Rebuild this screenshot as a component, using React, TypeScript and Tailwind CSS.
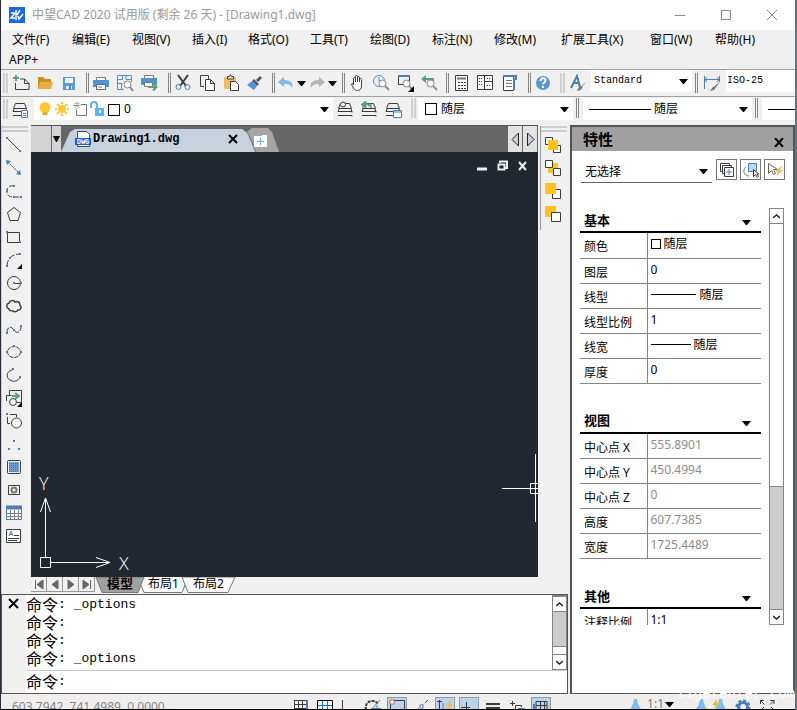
import type { ReactNode } from "react";

const INK = "#3c3c3c";
const BLUE = "#4a7fb5";

const MENUS = [
  ["文件(F)", "w-[60px]"],
  ["编辑(E)", "w-[60px]"],
  ["视图(V)", "w-[60px]"],
  ["插入(I)", "w-[56px]"],
  ["格式(O)", "w-[62px]"],
  ["工具(T)", "w-[60px]"],
  ["绘图(D)", "w-[62px]"],
  ["标注(N)", "w-[62px]"],
  ["修改(M)", "w-[67px]"],
  ["扩展工具(X)", "w-[89px]"],
  ["窗口(W)", "w-[65px]"],
  ["帮助(H)", "w-[60px]"],
];

function Icon({ children, size = 18 }: { children: ReactNode; size?: number }) {
  return (
    <svg width={size} height={size} viewBox={`0 0 ${size} ${size}`} fill="none" stroke={INK} className="block shrink-0" aria-hidden="true">
      {children}
    </svg>
  );
}

function Tool({ label, children, className = "h-6 w-6" }: { label: string; children: ReactNode; className?: string }) {
  return (
    <button type="button" title={label} aria-label={label} className={`flex shrink-0 items-center justify-center ${className}`}>
      <Icon>{children}</Icon>
    </button>
  );
}

function Caret({ className = "" }: { className?: string }) {
  return (
    <svg width="9" height="5" viewBox="0 0 9 5" className={`block shrink-0 ${className}`} aria-hidden="true">
      <path d="M0 0H9L5 5H4Z" fill="#000" />
    </svg>
  );
}

function Sep({ className, thick = false }: { className: string; thick?: boolean }) {
  return (
    <div className={`flex shrink-0 justify-end gap-px ${className}`}>
      <div className={`h-5 ${thick ? "w-[2px] bg-[#cfcfcf]" : "w-px bg-[#858585]"}`} />
      <div className={`h-5 ${thick ? "w-[2px] bg-[#cfcfcf]" : "w-px bg-[#858585]"}`} />
    </div>
  );
}

function Combo({ label, value, lead, className, mono = false, caret = true }: { label: string; value: string; lead?: ReactNode; className: string; mono?: boolean; caret?: boolean }) {
  return (
    <div className={`relative flex h-[22px] shrink-0 items-center bg-white ${className}`}>
      {lead}
      <select
        aria-label={label}
        className={`h-full min-w-0 flex-1 appearance-none bg-transparent leading-5 outline-none ${mono ? "font-['Liberation_Mono','Noto_Sans_CJK_SC',monospace] text-[10px]" : "text-xs"}`}
      >
        <option>{value}</option>
      </select>
      {caret && <Caret className="pointer-events-none absolute right-1" />}
    </div>
  );
}

function Swatch() {
  return <span className="mr-1 h-3 w-3 shrink-0 border border-black bg-white" />;
}

const magnifier = (
  <g stroke="#92888e">
    <circle cx="10.5" cy="9.5" r="3.5" fill="#f7f7f7" />
    <path d="M13 12l4 4" strokeWidth="2" />
  </g>
);

function MainToolbar() {
  return (
    <div className="flex h-[27px] items-center overflow-hidden border-t border-[#a0a0a0]">
      <Sep className="mr-px w-[7px]" thick />
      <Tool label="新建">
        <path d="M3.500 9V15.500H17V9.500H12.500V5H8M12.500 5L17 9.500" />
        <path d="M4 1v6M1 4h6" stroke="#5a9e88" strokeWidth="2" />
      </Tool>
      <Tool label="打开">
        <path d="M2 3h5l2 2h6v9H2z" fill="#c98f26" stroke="none" />
        <path d="M4 8h13l-2 7H2z" fill="#e8ae42" stroke="none" />
      </Tool>
      <Tool label="保存">
        <path d="M3 3h12v13H3z" fill="#5a9bd8" stroke="none" />
        <path d="M5 4h8v5H5zM6 12h6v3H6z" fill="#eaf1f8" stroke="none" />
        <path d="M9 12h2v3H9z" fill="#4a82bb" stroke="none" />
      </Tool>
      <Sep className="w-2" />
      <Tool label="打印">
        <path d="M4.500 6V3.500h9V6" stroke="#777" fill="#fff" />
        <path d="M1 6h16v7H1z" fill="#4d93d6" stroke="none" />
        <path d="M4.500 10.500h9v5h-9z" fill="#fff" stroke="#666" />
        <path d="M6 13h4" stroke="#5b84b4" />
      </Tool>
      <Tool label="打印预览">
        <path d="M15.500 8V1.500h-14v14H8M1.500 5.500h5v-4M6.500 9.500h-5M10 1.500v4h5M5.500 9v6" stroke="#4f8fcd" />
        <circle cx="11.500" cy="10.500" r="3.500" stroke="#8d8489" fill="#f7f7f7" />
        <path d="M14 13l3 4" stroke="#8d8489" strokeWidth="2" />
      </Tool>
      <Tool label="输出">
        <path d="M4.500 4V1.500h9V4" stroke="#777" fill="#fff" />
        <path d="M1 4h16v7H1z" fill="#4d93d6" stroke="none" />
        <path d="M4.500 8.500h8v4h-8z" fill="#fff" stroke="#777" />
        <path d="M8 13h8M13 9.500l3.500 3.500-3.500 3.500" stroke="#5a9e88" strokeWidth="2" />
      </Tool>
      <Sep className="w-[10px]" />
      <Tool label="剪切">
        <path d="M4 1l8 11M14 1L6 12" strokeWidth="2" />
        <circle cx="4.500" cy="13" r="2.500" stroke={BLUE} />
        <circle cx="13.500" cy="13" r="2.500" stroke={BLUE} />
      </Tool>
      <Tool label="复制">
        <path d="M6 12.500H2.500v-11h8v4" />
        <path d="M7.500 5.500h5l4 4v7h-9zM12.500 5.500v4h4" fill="#fff" />
      </Tool>
      <Tool label="粘贴">
        <path d="M2 3h12v12H2z" fill="#ebbd6a" stroke="none" />
        <path d="M5.500 5V2.500h2l1-2 1 2h2V5z" fill="#eee" />
        <path d="M8.500 7.500h5l3 3v6h-8z" fill="#fff" />
      </Tool>
      <Tool label="特性匹配">
        <path d="M15 3l-4 4" strokeWidth="3" stroke="#4c5865" />
        <path d="M8 5l5 5-2 2-5-5z" fill="#4c5865" stroke="none" />
        <path d="M6 7l5 5-3 4-7-5z" fill="#4f93d6" stroke="none" />
      </Tool>
      <Sep className="w-2" />
      <Tool label="放弃" className="h-6 w-[22px]">
        <path d="M7 3L1 8l6 5v-3c5 0 7 1 8 4 2-5-2-8-8-8z" fill="#7fb9ee" stroke="none" />
      </Tool>
      <button type="button" aria-label="放弃列表" className="w-[9px]"><Caret /></button>
      <Tool label="重做" className="h-6 w-[22px]">
        <path d="M11 3l6 5-6 5v-3c-5 0-7 1-8 4-2-5 2-8 8-8z" fill="#b4b4b4" stroke="none" />
      </Tool>
      <button type="button" aria-label="重做列表" className="w-[9px]"><Caret /></button>
      <Sep className="w-[8px]" />
      <Tool label="平移">
        <path d="M5.500 10V4.500a1 1 0 012 0V8 2.500a1 1 0 012 0V8 3.500a1 1 0 012 0V8 5.500a1 1 0 012 0V12c0 3-2 4.500-4 4.500-3 0-4-2-6-6.500 1-1 2 0 2 1z" fill="#fff" />
      </Tool>
      <Tool label="实时缩放">
        <circle cx="7" cy="7" r="5.500" stroke="#4f8fcd" />
        <path d="M7 3v4h2" stroke="#4f8fcd" />
        {magnifier}
      </Tool>
      <Tool label="窗口缩放">
        <path d="M2.500 1.500h11v9h-11z" />
        <path d="M2 2h12" stroke={BLUE} strokeWidth="2" />
        {magnifier}
        <path d="M18 12v6h-6z" fill="#000" stroke="none" />
      </Tool>
      <Tool label="缩放上一个">
        <path d="M6 1v8L1 5z" fill="#5a9e88" stroke="none" />
        <path d="M5 5h8v2" stroke="#5a9e88" strokeWidth="2" />
        {magnifier}
      </Tool>
      <Sep className="w-2" />
      <Tool label="计算器">
        <path d="M3.500 1.500h12v15h-12z" fill="#fafafa" />
        <path d="M5 4.500h9" strokeWidth="2" stroke="#737373" />
        <path d="M6 8.500h8M6 11.500h8M6 14.500h8" strokeDasharray="2 1" />
      </Tool>
      <Tool label="设计中心">
        <path d="M1.500 1.500h15v14h-15zM8.500 2v13M9 7.500h7" fill="#fafafa" />
        <path d="M3 4.500h4M3 7.500h4M3 10.500h4M11 4.500h4M11 11.500h4" strokeDasharray="1 1" />
      </Tool>
      <Tool label="工具选项板">
        <path d="M3.500 2.500h10v14h-10z" fill="#fafafa" />
        <path d="M3 2h13v3h-2v11" stroke={BLUE} strokeWidth="2" />
        <path d="M6 6.500h6M6 9.500h6M6 12.500h6" stroke="#777" />
      </Tool>
      <Sep className="w-[10px]" />
      <Tool label="帮助">
        <circle cx="9" cy="9" r="7" fill="#5696d2" stroke="none" />
        <path d="M6.500 7c0-4 5-3 5-.5C11.500 8 9 8.500 9 10.500M9 12v2" stroke="#fff" strokeWidth="2" />
      </Tool>
      <Sep className="w-[10px]" thick />
      <Tool label="文字样式" className="ml-[2px] h-6 w-6">
        <path d="M1 14L7 2l3 11M4 9h5" stroke={BLUE} strokeWidth="2" />
        <path d="M17 7l-4 5-2 4-4 1 2-4 3-1z" fill="#777" stroke="none" />
      </Tool>
      <Combo label="文字样式名称" value="Standard" mono className="w-[101px] self-start pl-[3px]" />
      <Sep className="w-[6px]" />
      <Tool label="标注样式" className="ml-[2px] h-6 w-6">
        <path d="M1.500 2v13M16.500 2v6M2 5.500h14M4 3L2 5.500 4 8M14 3l2 2.500L14 8" stroke={BLUE} />
        <path d="M17 7l-3 5-3 4-4 1 3-4 2-1z" fill="#777" stroke="none" />
      </Tool>
      <Combo label="标注样式名称" value="ISO-25" mono caret={false} className="ml-[2px] min-w-0 flex-1 self-start pl-px" />
    </div>
  );
}

function LayerGlyphs() {
  return (
    <svg width="90" height="18" viewBox="0 0 90 18" fill="none" className="block shrink-0" aria-hidden="true">
      <circle cx="11" cy="7.500" r="5.500" fill="#ffc533" />
      <path d="M8.500 12h5v3h-5z" fill="#e5aa28" />
      <g stroke="#ffc533" strokeWidth="2">
        <circle cx="28" cy="9" r="3" fill="#ffc533" />
        <path d="M28 2v2M28 14v2M21 9h2M33 9h2M23 4l2 2M31 12l2 2M33 4l-2 2M25 12l-2 2" />
      </g>
      <g stroke="#777">
        <path d="M47 4.500h5.500v11h-10v-6" />
        <path d="M43 2v7M39.500 5.500h7M40.500 3l5 5M45.500 3l-5 5" strokeDasharray="2 1" />
      </g>
      <path d="M57 8V5c0-4 6-4 6 0v4" stroke="#59b3f5" strokeWidth="2" />
      <path d="M61 8h9v8h-9z" fill="#59b3f5" />
      <path d="M65 10h2v3h-2z" fill="#fff" />
      <path d="M74.500 4.500h11v11h-11z" stroke="#000" fill="#fff" />
    </svg>
  );
}

const stack = <path d="M4.500 2.500h9l2 5h-13zM2 10.500h14v1M2 14.500h14v1M3 8l-1 3M15 8l1 3" />;

function LayerToolbar() {
  return (
    <div className="flex h-[29px] items-start overflow-hidden border-t border-[#a0a0a0] pt-px">
      <Sep className="mt-px w-[7px]" thick />
      <Tool label="图层特性管理器" className="h-6 w-[26px] pr-[2px]">
        {stack}
        <path d="M10.500 9.500h6v7h-6zM12 12.500h3M12 14.500h3" fill="#fff" stroke={BLUE} />
      </Tool>
      <Combo label="图层" value="0" lead={<LayerGlyphs />} className="w-[299px]" />
      <Tool label="置为当前图层">
        {stack}
        <circle cx="7" cy="3.500" r="2.500" fill="#f0f0f0" />
      </Tool>
      <Tool label="上一个图层">
        {stack}
        <path d="M6 0v7L1 3.500zM6 3h5v4" stroke="#5a9e88" fill="#5a9e88" />
      </Tool>
      <Tool label="图层状态">
        {stack}
        <path d="M9.500 9.500h8v7h-8zM10 11h7" fill="#fff" stroke={BLUE} />
      </Tool>
      <Sep className="w-[11px]" thick />
      <Combo label="颜色" value="随层" className="ml-[2px] w-[155px] pl-[7px]" lead={<Swatch />} />
      <Sep className="w-[6px]" />
      <Combo label="线型" value="随层" className="ml-1 w-[169px] pl-[6px]" lead={<span className="mr-[3px] h-px w-[62px] bg-black" />} />
      <Sep className="w-[6px]" />
      <div className="ml-1 flex h-[22px] min-w-0 flex-1 items-center bg-white pl-[6px]"><span className="h-px w-full bg-black" /></div>
    </div>
  );
}

const DOT = { fill: BLUE, stroke: "none" };

const DRAW_TOOLS: [string, ReactNode][] = [
  ["直线", <><path d="M2 2l13 13" /><path d="M1 1h2v2H1zM14 14h2v2h-2z" {...DOT} /></>],
  ["构造线", <><path d="M3 3l12 12" strokeDasharray="2 1" /><path d="M1 1l5 1-4 4zM16 16l-5-1 4-4z" {...DOT} /></>],
  ["多段线", <><path d="M9 4C0 2-1 15 8 15h8" strokeDasharray="5 2" /><path d="M8 3h2v2H8zM1 8h2v2H1zM8 14h2v2H8zM15 14h2v2h-2z" {...DOT} /></>],
  ["正多边形", <path d="M9 2.500l6.500 5-2.500 8H5l-2.500-8z" />],
  ["矩形", <><path d="M2.500 4.500h12v10h-12z" /><path d="M1 3h2v2H1zM14 13h2v2h-2z" {...DOT} /></>],
  ["圆弧", <><path d="M2 15C2 8 7 3 15 3" strokeDasharray="6 2" /><path d="M1 14h2v2H1zM4 6h2v2H4zM14 2h2v2h-2z" {...DOT} /><path d="M17 13v5h-5z" fill="#000" stroke="none" /></>],
  ["圆", <><circle cx="9" cy="9" r="6.500" /><path d="M9 9.500h7" /><path d="M8 8h2v2H8zM15 8h2v2h-2z" {...DOT} /></>],
  ["修订云线", <path d="M4 12c-3-1-3-5 0-6 1-3 5-3 6-1 3-1 5 0 5 3 2 2 1 5-2 5-1 2-4 2-5 1-2 0-4 0-4-2z" strokeWidth="1.5" />],
  ["样条曲线", <><path d="M2 12C3 6 6 6 9 10c3 4 6 3 7-3" strokeDasharray="5 1" /><path d="M1 12h2v2H1zM8 9h2v2H8zM15 5h2v2h-2z" {...DOT} /></>],
  ["椭圆", <><ellipse cx="9" cy="9" rx="6.500" ry="5.500" strokeDasharray="4 1" /><path d="M8 2h2v2H8zM1 8h2v2H1zM15 8h2v2h-2z" {...DOT} /></>],
  ["椭圆弧", <><path d="M7 4c-6 1-7 9 0 11 4 1 7-1 8-4" /><path d="M7 2h2v2H7zM14 10h2v2h-2z" {...DOT} /></>],
  ["插入块", <><path d="M4.500 6V1.500h12v12H12M1.500 12V6.500h5" fill="none" /><path d="M7 7h6M10 4l4 3-4 3" stroke="#5a9e88" strokeWidth="2" /><circle cx="8" cy="13" r="3.500" fill="#f4f4f4" /><path d="M17 13v5h-5z" fill="#000" stroke="none" /></>],
  ["创建块", <><path d="M5 2.500h6.500V5M2.500 5v6.500H5" /><circle cx="11.500" cy="11" r="5" fill="#f7f7f7" /><path d="M1 1h2v2H1z" {...DOT} /></>],
  ["点", <path d="M8 5h2v2H8zM3 13h2v2H3zM13 13h2v2h-2z" {...DOT} />],
  ["图案填充", <><rect x="2.500" y="2.500" width="13" height="13" rx="1" /><path d="M4 4h10v10H4z" fill="#6fa0cf" stroke="none" /><path d="M4 5.500h10M4 7.500h10M4 9.500h10M4 11.500h10M4 13.500h10" stroke="#3f73a8" strokeDasharray="1 1" /></>],
  ["面域", <><path d="M3.500 4.500h11v9h-11z" /><circle cx="9" cy="9" r="2.500" stroke="#777" strokeWidth="2" /></>],
  ["表格", <><path d="M1.500 2.500h15v13h-15z" fill="#fff" stroke={BLUE} /><path d="M1 3.500h16" stroke={BLUE} strokeWidth="4" /><path d="M5.500 6v9M9.500 6v9M13.500 6v9M2 9.500h14M2 12.500h14" stroke="#85798a" /></>],
  ["多行文字", <><path d="M1.500 2.500h14v13h-14z" fill="#fff" /><path d="M4 9l2-5 2 5M5 7.500h3" stroke={BLUE} /><path d="M9 8.500h5M3 11.500h11M3 13.500h9" /></>],
];

const ORDER_TOOLS: [string, ReactNode][] = [
  ["前置", <><path d="M1.500 1.500h7v7h-7zM9.500 9.500h7v7h-7z" fill="#fff" /><path d="M4 4h10v10H4z" fill="#ffc222" stroke="none" /></>],
  ["后置", <><path d="M4 4h10v10H4z" fill="#ffc222" stroke="none" /><path d="M1.500 1.500h7v7h-7zM9.500 9.500h7v7h-7z" fill="#fff" /></>],
  ["置于对象之上", <><path d="M8.500 7.500h8v9h-8z" fill="#fff" /><path d="M1 1h11v11H1z" fill="#ffc222" stroke="none" /></>],
  ["置于对象之下", <><path d="M1 1h11v11H1z" fill="#ffc222" stroke="none" /><path d="M7.500 7.500h9v9h-9z" fill="#fff" /></>],
];

function DocumentTabs() {
  return (
    <div className="flex h-[27px] shrink-0 items-stretch border-t border-[#555] bg-[#666]">
      <div className="w-5 bg-[#d4d4d4]" />
      <button type="button" aria-label="文档列表" className="ml-px flex w-[9px] items-center justify-center bg-[#d4d4d4]">
        <svg width="7" height="6" viewBox="0 0 7 6" aria-hidden="true"><path d="M0 0h7L4 6H3z" fill="#000" /></svg>
      </button>
      <div className="relative flex w-[193px] items-center pl-[13px]">
        <svg width="218" height="26" viewBox="0 0 218 26" className="absolute left-0 top-0" aria-hidden="true">
          <path d="M184 26V7l7-5h16l4 4 7 20z" fill="#a5a5a5" />
          <path d="M0 26L9 6l5-3h167l5 4 8 19z" fill="#c7d2de" />
          <path d="M182 3l5 4 8 19" fill="none" stroke="#777" />
          <path d="M193 10h8v-1h5v12h-13z" fill="#fff" />
          <path d="M199.500 12v7M196 15.500h7" stroke="#59b3f5" strokeWidth="1" fill="none" />
        </svg>
        <svg width="18" height="18" viewBox="0 0 18 18" fill="none" className="relative mr-px shrink-0" aria-hidden="true">
          <path d="M3.500 1.500h9l3 3v12h-12z" fill="#fff" stroke="#444" />
          <path d="M1 8h16v7H1z" fill="#0c62d8" />
          <text x="9" y="14" textAnchor="middle" fontSize="7" fontWeight="bold" fill="#fff" fontFamily="Liberation Mono, monospace">DWG</text>
        </svg>
        <button type="button" className="relative flex-1 text-left font-['Liberation_Mono',monospace] text-xs font-bold leading-6">Drawing1.dwg</button>
        <button type="button" aria-label="关闭 Drawing1.dwg" className="relative mr-[16px]">
          <svg width="10" height="10" viewBox="0 0 10 10" aria-hidden="true"><path d="M1 1l8 8M9 1L1 9" stroke="#000" strokeWidth="2" /></svg>
        </button>
      </div>
      <button type="button" aria-label="新建图形" className="w-[22px]" />
      <div className="flex-1" />
      <button type="button" aria-label="向左滚动" className="flex w-[14px] items-center justify-center bg-[#e2e2e2]">
        <svg width="9" height="15" viewBox="0 0 9 15" aria-hidden="true"><path d="M7.500 1v13L1 7.500z" fill="#c7d2de" stroke="#222" /></svg>
      </button>
      <button type="button" aria-label="向右滚动" className="mx-px flex w-[14px] items-center justify-center bg-[#e2e2e2]">
        <svg width="9" height="15" viewBox="0 0 9 15" aria-hidden="true"><path d="M1.500 1v13L8 7.500z" fill="#c7d2de" stroke="#222" /></svg>
      </button>
    </div>
  );
}

function Canvas() {
  return (
    <div className="relative min-h-0 flex-1 overflow-hidden bg-[#212830]">
      <div className="absolute right-[10px] top-2 flex gap-[9px]">
        <button type="button" aria-label="最小化图形"><svg width="11" height="12" viewBox="0 0 11 12" aria-hidden="true"><path d="M0 9h10" stroke="#eee" strokeWidth="3" /></svg></button>
        <button type="button" aria-label="还原图形"><svg width="11" height="12" viewBox="0 0 11 12" fill="none" aria-hidden="true"><path d="M3 3V1.500h7V8H8M1.500 4.500h6v5h-6z" stroke="#eee" strokeWidth="2" /></svg></button>
        <button type="button" aria-label="关闭图形"><svg width="11" height="12" viewBox="0 0 11 12" aria-hidden="true"><path d="M2 2l7 8M9 2l-7 8" stroke="#eee" strokeWidth="2" /></svg></button>
      </div>
      <svg width="100" height="100" viewBox="0 0 100 100" fill="none" stroke="#fff" className="absolute bottom-0 left-0" aria-hidden="true">
        <path d="M9.500 80.500h10v10h-10zM14.500 80V21M9.500 35l5-14 5 14M20 85.500h58M65 80.500l14 5-14 5" />
      </svg>
      <span className="absolute bottom-[84px] left-2 font-['Open_Sans',sans-serif] text-lg font-light leading-5 text-white">Y</span>
      <span className="absolute bottom-1 left-[88px] font-['Open_Sans',sans-serif] text-lg font-light leading-5 text-white">X</span>
      <svg width="36" height="68" viewBox="0 0 36 68" fill="none" stroke="#fff" className="absolute bottom-[55px] right-0" aria-hidden="true">
        <path d="M0 34.500h36M33.500 0v68M28.500 29.500h10v10h-10z" />
      </svg>
    </div>
  );
}

function LayoutTabs() {
  const arrows: [string, string][] = [
    ["第一个布局", "M4.500 3v9M12 3v9L6 7.500z"],
    ["上一个布局", "M11 3v9L5 7.500z"],
    ["下一个布局", "M5 3v9l6-4.500z"],
    ["最后一个布局", "M11.500 3v9M4 3v9l6-4.500z"],
  ];
  return (
    <div className="flex h-[17px] shrink-0 items-start">
      {arrows.map(([label, d]) => (
        <button key={label} type="button" aria-label={label} className="h-[15px] w-4 border-b border-r border-[#999]">
          <svg width="15" height="14" viewBox="0 0 15 14" className="block" aria-hidden="true"><path d={d} fill="#666" stroke="#666" /></svg>
        </button>
      ))}
      <div className="relative flex h-4 items-start text-xs leading-[13px]">
        <svg width="142" height="16" viewBox="0 0 142 16" fill="none" stroke="#777" className="absolute left-0 top-0" aria-hidden="true">
          <path d="M49 0h38l-2 8 3 7H48l-3-7z" fill="#fafafa" stroke="none" />
          <path d="M87 0l6 15.500h40L140 0z" fill="#fafafa" />
          <path d="M46 8l3 7.500h38l3-7.500" />
          <path d="M1 0l6 15.500h36L49 0z" fill="#a0a0a0" />
        </svg>
        <button type="button" className="relative ml-3 w-[41px] text-left text-[13px] font-bold">模型</button>
        <button type="button" className="relative w-[45px] text-left">布局1</button>
        <button type="button" className="relative text-left">布局2</button>
      </div>
    </div>
  );
}

function ScrollArrow({ up = false }: { up?: boolean }) {
  return (
    <button type="button" aria-label={up ? "向上滚动" : "向下滚动"} className="flex h-4 w-full shrink-0 items-center justify-center border border-[#858585] bg-white">
      <svg width="7" height="5" viewBox="0 0 7 5" fill="none" aria-hidden="true">
        <path d={up ? "M0 4l3.500-3L7 4" : "M0 1l3.500 3L7 1"} stroke="#222" strokeWidth="1.5" />
      </svg>
    </button>
  );
}

function PromptText({ text = "" }: { text?: string }) {
  return (
    <>
      <span className="text-[16px] leading-[18px]">命令</span>
      <span className="whitespace-pre font-['Liberation_Mono',monospace] text-[13px] leading-[18px]">: {text}</span>
    </>
  );
}

function CommandWindow() {
  return (
    <div className="mr-[2px] flex h-[100px] shrink-0 border border-[#555] bg-white">
      <div className="flex w-6 shrink-0 items-start bg-[#f0f0f0] pl-[6px] pt-[3px]">
        <button type="button" aria-label="关闭命令行">
          <svg width="11" height="11" viewBox="0 0 11 11" aria-hidden="true"><path d="M1 1l9 9M10 1l-9 9" stroke="#000" strokeWidth="2" /></svg>
        </button>
      </div>
      <div className="flex min-w-0 flex-1 flex-col">
        <div className="flex h-[76px] border-b border-[#ccc]">
          <div className="flex-1 overflow-hidden pt-px">
            {["_options", "", "", "_options"].map((text, i) => (
              <div key={i} className="flex h-[18px] items-center"><PromptText text={text} /></div>
            ))}
          </div>
          <div className="flex w-[15px] flex-col border-t border-[#858585]">
            <ScrollArrow up />
            <div className="h-[35px] border-x border-b border-[#858585] bg-[#cdcdcf]" />
            <div className="flex-1 border-x border-[#858585]" />
            <ScrollArrow />
          </div>
        </div>
        <div className="flex h-[22px] items-center">
          <label htmlFor="command" className="flex items-center"><PromptText /></label>
          <input id="command" className="min-w-0 flex-1 font-['Liberation_Mono',monospace] text-[13px] outline-none" />
        </div>
      </div>
    </div>
  );
}

type Row = { name: string; value: string; lead?: ReactNode; muted?: boolean; select?: boolean };

const SECTIONS: { title: string; rows: Row[] }[] = [
  {
    title: "基本",
    rows: [
      { name: "颜色", value: "随层", lead: <span className="mr-[3px] h-[10px] w-[10px] shrink-0 border border-black" />, select: true },
      { name: "图层", value: "0", select: true },
      { name: "线型", value: "随层", lead: <span className="mr-1 h-px w-[45px] shrink-0 bg-black" />, select: true },
      { name: "线型比例", value: "1" },
      { name: "线宽", value: "随层", lead: <span className="mr-[3px] h-px w-10 shrink-0 bg-black" />, select: true },
      { name: "厚度", value: "0" },
    ],
  },
  {
    title: "视图",
    rows: [
      { name: "中心点 X", value: "555.8901", muted: true },
      { name: "中心点 Y", value: "450.4994", muted: true },
      { name: "中心点 Z", value: "0", muted: true },
      { name: "高度", value: "607.7385", muted: true },
      { name: "宽度", value: "1725.4489", muted: true },
    ],
  },
  { title: "其他", rows: [{ name: "注释比例", value: "1:1", select: true }] },
];

function PropertySection({ title, rows }: { title: string; rows: Row[] }) {
  return (
    <section className="mb-[25px]">
      <button type="button" className="flex h-[25px] w-full items-center justify-between border-b-2 border-black pl-1 pr-[10px] text-[13px] font-bold leading-5">
        {title}
        <Caret className="mt-[6px]" />
      </button>
      <table className="w-full table-fixed border-collapse text-xs">
        <tbody>
          {rows.map((row) => (
            <tr key={row.name} className="h-[25px] border-b border-[#858585]">
              <th scope="row" className="w-[67px] border-r border-[#858585] p-0 text-left font-normal">
                <label htmlFor={row.name} className="block pl-1 pt-1 leading-5">{row.name}</label>
              </th>
              <td className="p-0">
                <div className="flex h-6 items-center pb-[2px] pl-[3px]">
                  {row.lead}
                  {row.select ? (
                    <select id={row.name} className="min-w-0 flex-1 appearance-none bg-transparent leading-5 outline-none"><option>{row.value}</option></select>
                  ) : (
                    <input id={row.name} defaultValue={row.value} readOnly={row.muted} className={`w-full min-w-0 bg-transparent leading-5 outline-none ${row.muted ? "text-[#8c8c8c]" : "text-black"}`} />
                  )}
                </div>
              </td>
            </tr>
          ))}
        </tbody>
      </table>
    </section>
  );
}

function PropertiesPanel() {
  const boxed = "h-[21px] w-[21px] border border-[#777]";
  return (
    <aside className="flex w-[225px] shrink-0 flex-col border-2 border-b border-[#555] bg-white">
      <header className="flex h-6 shrink-0 items-center justify-between bg-[#a0a0a0] pl-[11px] pr-[9px]">
        <h2 className="text-[15px] font-bold leading-6">特性</h2>
        <button type="button" aria-label="关闭特性" className="mt-[7px]">
          <svg width="10" height="9" viewBox="0 0 10 9" className="block" aria-hidden="true"><path d="M1 0l8 9M9 0L1 9" stroke="#000" strokeWidth="2" /></svg>
        </button>
      </header>
      <div className="flex shrink-0 items-start gap-[3px] pl-[9px] pr-[8px] pt-2">
        <div className="mr-px min-w-0 flex-1 border-b border-[#666]">
          <Combo label="选择对象" value="无选择" className="w-full pl-1 pt-[3px]" />
          <div className="h-px" />
        </div>
        <Tool label="切换 PICKADD" className={boxed}>
          <path d="M4 10.500H2.500v-8h9V4M6 12.500H4.500v-8h9v2M6.500 6.500h9v9h-9z" fill="#fff" />
          <path d="M11 8v6M8 11h6" stroke={BLUE} />
        </Tool>
        <Tool label="选择对象" className={boxed}>
          <path d="M4 6c-4 3-2 9 3 9" stroke="#777" />
          <path d="M6.500 2.500h8v8h-8z" fill="#b9dafb" stroke={BLUE} />
          <path d="M11.500 8.500v7l2-2 2 3 1-1-1.500-2.500h2z" fill="#fff" />
        </Tool>
        <Tool label="快速选择" className={boxed}>
          <path d="M2.500 2.500v10l3-3 2 4 2-1-2-4h4z" fill="#fff" stroke="#666" />
          <path d="M15 5l-6 6h3l-2 5 7-7h-3l2-4z" fill="#f3bd59" stroke="none" />
        </Tool>
      </div>
      <div className="mb-[68px] mt-[25px] flex min-h-0 flex-1 pl-2 pr-[9px]">
        <div className="min-w-0 flex-1 overflow-hidden pr-[8px]">
          {SECTIONS.map((section) => (
            <PropertySection key={section.title} {...section} />
          ))}
        </div>
        <div className="flex w-[15px] shrink-0 flex-col">
          <ScrollArrow up />
          <div className="flex-[262] border-x border-[#858585]" />
          <div className="flex-[122] border-x border-t border-[#858585] bg-[#cdcdcf]" />
          <ScrollArrow />
        </div>
      </div>
    </aside>
  );
}

const MODES: [string, boolean, ReactNode][] = [
  ["捕捉", false, <><path d="M2 2.500h12M2.500 2v14M6.500 2v14M10.500 2v14M2 6.500h12M2 10.500h12M2 14.500h12" /><path d="M14 2h2v14h-2z" {...DOT} /></>],
  ["栅格", false, <><path d="M1.500 2.500h15v14h-15z" fill="#fff" stroke="#000" /><path d="M6.500 3v13M11.500 3v13M2 7.500h14M2 12.500h14" stroke="#1673e8" /></>],
  ["正交", false, <path d="M2.500 2v14h12" />],
  ["极轴", false, <><path d="M2 12C1 6 4 3 8 3c3 0 5 1 6 3" strokeWidth="2" strokeDasharray="3 1" /><path d="M8 11l8-9M7 10.500h10M13 7v7" stroke={BLUE} /></>],
  ["对象捕捉", true, <><path d="M2.500 2.500h14v13h-14z" /><path d="M2 2h4v4H2z" stroke="#d9644a" fill="#fff" /></>],
  ["追踪", false, <><path d="M4 13L16 2" strokeDasharray="4 2" /><path d="M8 7h3v3H8z" stroke={BLUE} fill="#fff" /></>],
  ["动态UCS", true, <><path d="M3.500 2v14M1 3.500h5" /><path d="M7 5v8h8" stroke={BLUE} /><path d="M15 2l-6 6h3l-2 5 7-7h-3z" fill="#f5bc50" stroke="none" /></>],
  ["动态输入", true, <path d="M6.500 4v12M1 9.500h9" />],
  ["线宽", false, <path d="M2 6h14M2 10h14" strokeWidth="2" />],
  ["循环选择", false, <><path d="M4.500 3v5M2 5.500h5M7.500 11V7.500h6V9" /><path d="M10.500 10.500h6v5h-6z" stroke={BLUE} /></>],
  ["注释监视", true, <><path d="M4 3.500h11v10H4zM8.500 3v11M12.500 3v11M4 7.500h11" /><path d="M2 6v9h9" stroke={BLUE} strokeWidth="2" /></>],
];

const person = <path d="M8 1h3l1 5 4 7H3l4-7z" fill="#7dbdf0" stroke="none" />;

function StatusBar() {
  return (
    <footer className="relative flex h-4 shrink-0 items-start overflow-hidden border-b border-black bg-[#f0eded]">
      <output className="w-[290px] shrink-0 pl-[11px] pt-[5px] text-xs leading-4 text-[#858585]">603.7942, 741.4989, 0.0000</output>
      <div className="flex gap-1 pt-[3px]">
        {MODES.map(([label, on, art]) => (
          <Tool key={label} label={label} className={`h-5 w-5 border ${on ? "border-[#8c9aab] bg-[#bcd3ee]" : "border-transparent"}`}>{art}</Tool>
        ))}
      </div>
      <div className="flex-1" />
      <Tool label="注释比例" className="mt-[3px] h-5 w-6">{person}</Tool>
      <button type="button" className="flex items-center gap-px pt-[2px] text-xs leading-4 text-[#777]">1:1<Caret /></button>
      <Tool label="注释可见性" className="ml-[19px] mt-[3px] h-5 w-4">{person}<circle cx="14" cy="12" r="2" fill="#ffc222" stroke="none" /></Tool>
      <Tool label="自动缩放" className="mt-[3px] h-5 w-[22px]">{person}<path d="M6 1L1 7h3l-2 4 7-6H6z" fill="#f7b92e" stroke="none" /></Tool>
      <Tool label="设置" className="mt-[3px] h-5 w-6">
        <circle cx="9" cy="9" r="4.500" stroke={BLUE} strokeWidth="3" />
        <circle cx="9" cy="9" r="6.500" stroke={BLUE} strokeWidth="2" strokeDasharray="3 2" />
      </Tool>
      <Tool label="全屏显示" className="mr-4 mt-[3px] h-5 w-6"><path d="M2.500 6V2.500H6M2.500 2.500l4 4M12 2.500h4V6M16 2.500l-4 4M3 12l3-3M16 12l-3-3" /></Tool>
    </footer>
  );
}

export default function App() {
  return (
    <div className="flex h-screen min-h-[600px] flex-col overflow-hidden border-l border-r-2 border-l-[#2b2b3a] border-r-[#66727c] bg-[#f0f0f0] font-['Noto_Sans','Noto_Sans_CJK_SC',sans-serif] text-black">
      <div className="flex h-[30px] shrink-0 items-center bg-white pl-2 text-[#999]">
        <svg width="16" height="16" viewBox="0 0 16 16" fill="none" className="mr-[7px]" aria-hidden="true">
          <path d="M0 0h16v16H0z" fill="#1769e8" />
          <path d="M2 6h4L2 11h4M7 3v10M11 3L8 8M9 9l1 3 4-5" stroke="#fff" strokeWidth="1.500" />
        </svg>
        <h1 className="flex-1 text-xs font-normal leading-5">中望CAD 2020 试用版 (剩余 26 天) - [Drawing1.dwg]</h1>
        <div className="flex gap-9 pr-[18px]">
          <button type="button" aria-label="最小化"><svg width="10" height="10" viewBox="0 0 10 10" aria-hidden="true"><path d="M0 5.500h10" stroke="#888" /></svg></button>
          <button type="button" aria-label="最大化"><svg width="10" height="10" viewBox="0 0 10 10" fill="none" aria-hidden="true"><path d="M.5.500h9v9h-9z" stroke="#888" /></svg></button>
          <button type="button" aria-label="关闭"><svg width="10" height="10" viewBox="0 0 10 10" aria-hidden="true"><path d="M0 0l10 10M10 0L0 10" stroke="#888" /></svg></button>
        </div>
      </div>
      <nav className="flex shrink-0 flex-wrap items-center pl-[11px] text-xs leading-5">
        {MENUS.map(([text, width]) => (
          <button key={text} type="button" className={`text-left ${width}`}>{text}</button>
        ))}
        <div className="-ml-[3px] h-[19px] w-full"><button type="button" className="leading-[18px]">APP+</button></div>
      </nav>
      <MainToolbar />
      <LayerToolbar />
      <main className="flex min-h-0 flex-1">
        <div className="flex min-w-0 flex-1 flex-col">
          <div className="flex min-h-0 flex-1">
            <div className="flex w-[30px] shrink-0 flex-col overflow-hidden border-l border-[#ccc]">
              <div className="mb-[2px] mt-px flex h-[6px] w-[26px] shrink-0 flex-col justify-between"><div className="h-[2px] bg-[#ccc]" /><div className="h-[2px] bg-[#ccc]" /></div>
              {DRAW_TOOLS.map(([label, art]) => (
                <Tool key={label} label={label} className="h-[23px] w-6 pb-px">{art}</Tool>
              ))}
            </div>
            <div className="flex min-w-0 flex-1 flex-col">
              <DocumentTabs />
              <Canvas />
              <LayoutTabs />
            </div>
            <div className="w-8 shrink-0 pl-[2px]">
              <div className="border-l border-[#999] pb-1">
                <div className="mb-[2px] mt-px flex h-[6px] w-[26px] flex-col justify-between"><div className="h-[2px] bg-[#ccc]" /><div className="h-[2px] bg-[#ccc]" /></div>
                {ORDER_TOOLS.map(([label, art]) => (
                  <Tool key={label} label={label} className="h-[23px] w-6 pb-px">{art}</Tool>
                ))}
              </div>
            </div>
          </div>
          <CommandWindow />
        </div>
        <PropertiesPanel />
      </main>
      <div className="relative">
        <StatusBar />
        <span className="pointer-events-none absolute -top-[9px] right-0 font-['DejaVu_Sans_Mono',monospace] text-sm leading-4 text-white">tigerenter.com</span>
      </div>
    </div>
  );
}
